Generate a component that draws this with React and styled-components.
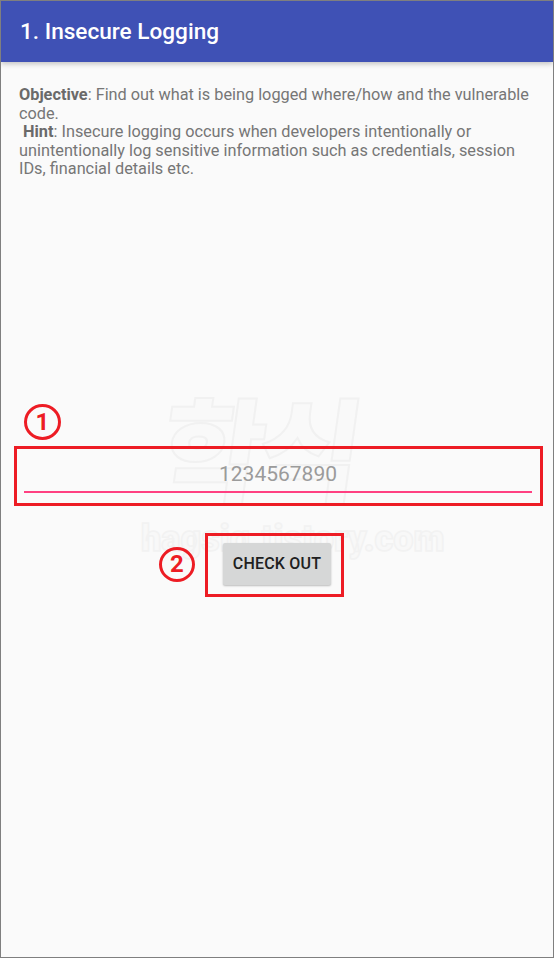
import React from 'react';
import styled, { createGlobalStyle } from 'styled-components';

const GlobalStyle = createGlobalStyle`
	html, body {
		margin: 0;
		padding: 0;
		background: #ffffff;
	}
	* {
		box-sizing: border-box;
	}
`

export default function App() {
	return (
		<>
			<GlobalStyle />
			<Frame>
				<AppBar>1. Insecure Logging</AppBar>
				<Content>
					<Description>
						<b>Objective</b>: Find out what is being logged where/how and the vulnerable code.
						<br />
						&nbsp;<b>Hint</b>: Insecure logging occurs when developers intentionally or unintentionally log sensitive information such as credentials, session IDs, financial details etc.
					</Description>
					<Form>
						<Marker>1</Marker>
						<InputBox>
							<Field>
								<Value>1234567890</Value>
							</Field>
						</InputBox>
						<ButtonRow>
							<ButtonBox>
								<SideMarker>2</SideMarker>
								<CheckOut>CHECK OUT</CheckOut>
							</ButtonBox>
						</ButtonRow>
					</Form>
				</Content>
				<WatermarkBig>학식</WatermarkBig>
				<WatermarkSmall>hagsig.tistory.com</WatermarkSmall>
			</Frame>
		</>
	)
}

const Frame = styled.div`
	position: relative;
	width: 554px;
	height: 958px;
	border: 1px solid #7f7f7f;
	background: #fafafa;
	overflow: hidden;
	font-family: Roboto, "Liberation Sans", sans-serif;
`
const AppBar = styled.div`
	position: relative;
	z-index: 2;
	height: 61px;
	display: flex;
	align-items: center;
	padding-left: 19px;
	padding-bottom: 1px;
	background: #3f51b5;
	color: #ffffff;
	font-size: 22.6px;
	font-weight: 500;
	box-shadow: 0 2px 5px rgba(0, 0, 0, 0.22);
`
const Content = styled.div`
	position: relative;
	z-index: 2;
	padding: 24px 18px 0 18px;
`
const Description = styled.p`
	margin: 0;
	font-size: 16.3px;
	line-height: 18.6px;
	color: #767676;
	b {
		font-weight: 700;
		color: #6a6a6a;
	}
`
const Form = styled.div`
	display: flex;
	flex-direction: column;
	margin-top: 225px;
	margin-left: -5px;
	margin-right: -8px;
`
const Marker = styled.div`
	width: 37px;
	height: 36px;
	margin-left: 10px;
	margin-bottom: 6px;
	border: 3.5px solid #ed1c24;
	border-radius: 50%;
	display: flex;
	align-items: center;
	justify-content: center;
	color: #ed1c24;
	font-size: 24px;
	font-weight: 700;
	line-height: 1;
`
const InputBox = styled.div`
	height: 60px;
	border: 3px solid #ed1c24;
	padding: 0 8px 0 7px;
`
const Field = styled.div`
	height: 44px;
	display: flex;
	align-items: flex-end;
	justify-content: center;
	border-bottom: 2px solid #ff4081;
`
const Value = styled.span`
	font-size: 21px;
	color: #9b9b9b;
	line-height: 1;
	padding-bottom: 6px;
`
const ButtonRow = styled.div`
	display: flex;
	justify-content: center;
	margin-top: 27px;
	padding-right: 8px;
`
const ButtonBox = styled.div`
	position: relative;
	width: 139px;
	height: 64px;
	border: 3px solid #ed1c24;
	padding: 7px 10px 9px 15px;
`
const SideMarker = styled(Marker)`
	position: absolute;
	right: calc(100% + 13px);
	top: 11px;
	margin: 0;
	width: 36px;
	height: 35px;
`
const CheckOut = styled.div`
	height: 42px;
	display: flex;
	align-items: center;
	justify-content: center;
	background: #d6d7d7;
	border-radius: 2px;
	box-shadow: 0 1px 2px rgba(0, 0, 0, 0.25);
	color: #202020;
	font-size: 16px;
	font-weight: 500;
	letter-spacing: 0.2px;
`
const WatermarkBig = styled.div`
	position: absolute;
	z-index: 1;
	left: 162px;
	top: 376px;
	font-family: "Noto Sans CJK KR", sans-serif;
	font-size: 112px;
	font-weight: 900;
	line-height: 1.2;
	letter-spacing: -6px;
	color: #f9f9f9;
	-webkit-text-stroke: 2px #f1f1f1;
	transform: skewX(-8deg);
`
const WatermarkSmall = styled.div`
	position: absolute;
	z-index: 1;
	left: 140px;
	top: 517px;
	font-family: Roboto, sans-serif;
	font-size: 36px;
	font-weight: 900;
	color: #f8f8f8;
	-webkit-text-stroke: 1.5px #f2f2f2;
`
